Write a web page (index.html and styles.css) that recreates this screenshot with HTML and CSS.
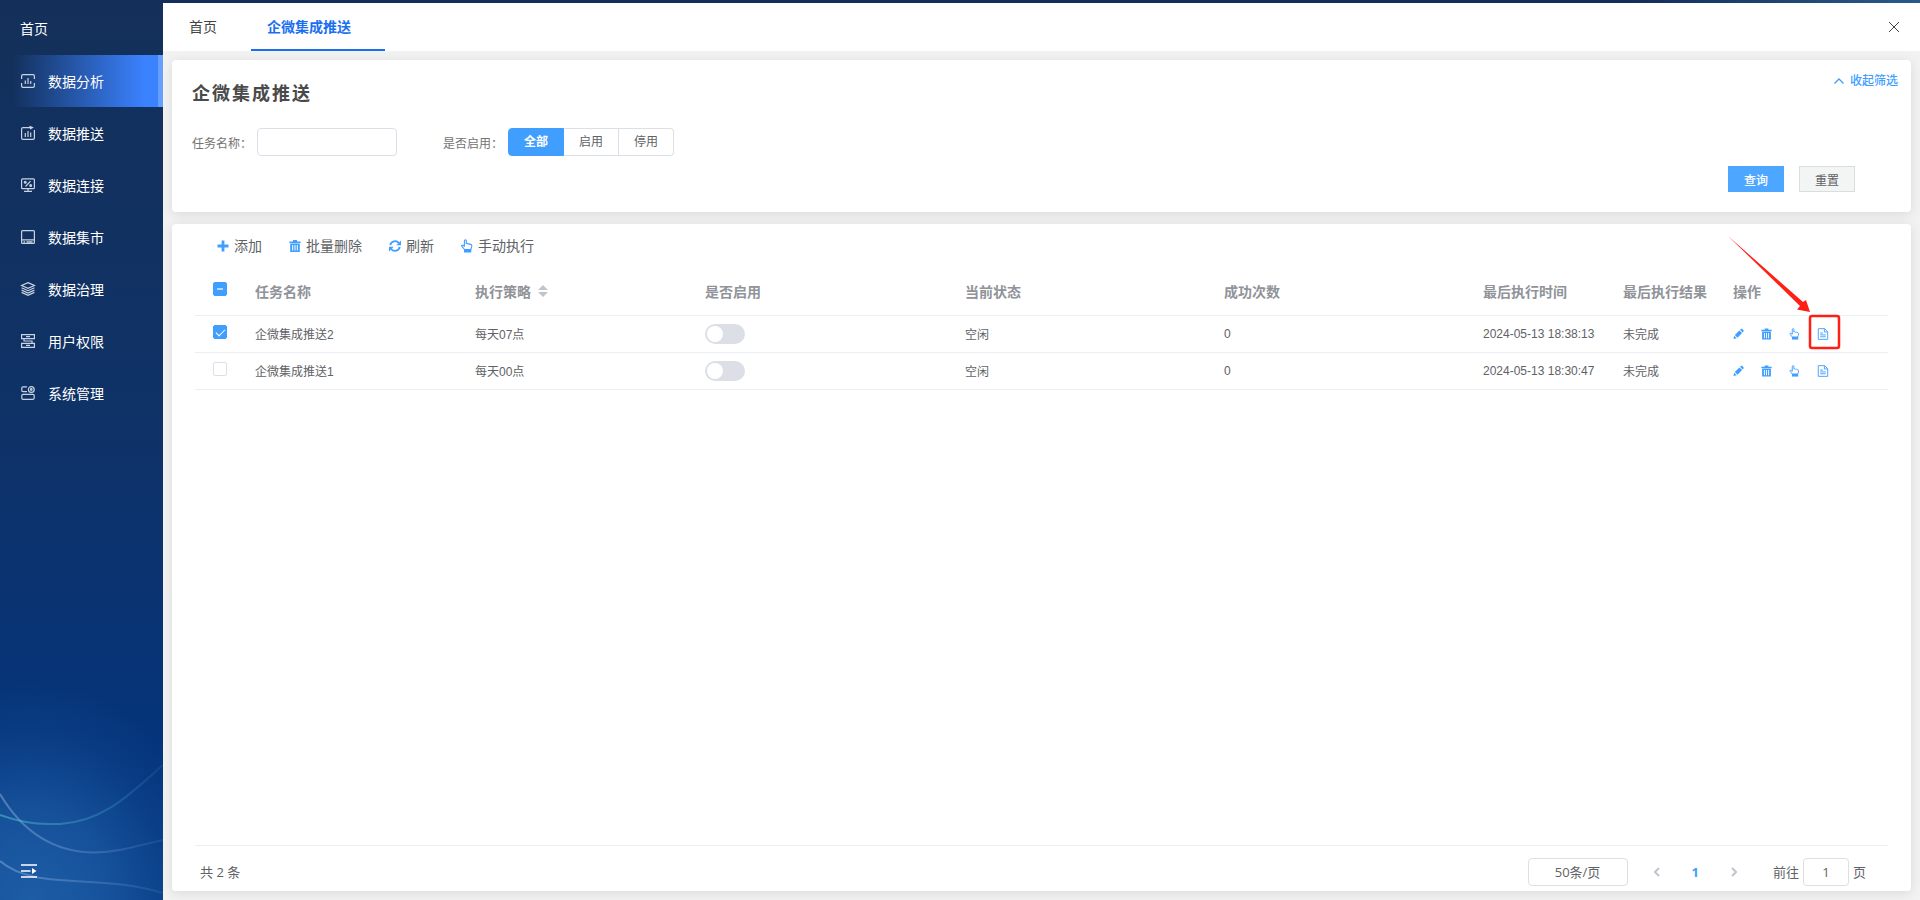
FILE: index.html
```html
<!DOCTYPE html>
<html lang="zh-CN">
<head>
  <meta charset="UTF-8">
  <meta name="viewport" content="width=device-width, initial-scale=1.0">
  <title>企微集成推送</title>
  <link rel="stylesheet" href="styles.css">
</head>
<body>
  <!-- shared icons -->
  <svg class="sprite" aria-hidden="true">
    <symbol id="i-trash" viewBox="0 0 12 12">
      <path fill="currentColor" fill-rule="evenodd" d="M4 0h4v1.4h3.6v1.5H.4V1.400H4zM1.200 3.500h9.600V12H1.200zM3.200 5v5.500h1V5zM5.500 5v5.500h1V5zM7.800 5v5.500h1V5z"/>
    </symbol>
    <symbol id="i-hand" viewBox="0 0 12 14">
      <path fill="none" stroke="currentColor" stroke-width="1.100" stroke-linejoin="round" d="M3.500 10.500L.8 7.200c-.4-.8.500-1.500 1.200-.9l1.400 1V1.700c0-1.300 1.900-1.300 1.900 0v3c.6-.5 1.500-.3 1.800.3.700-.4 1.500-.1 1.700.5.900-.3 2 .1 2 1.200 0 1.600-.6 2.500-1 3.800z"/>
      <path fill="currentColor" d="M3 10.500h7.300v3H3z"/>
    </symbol>
    <symbol id="i-edit" viewBox="0 0 12 12">
      <path fill="currentColor" d="M.5 11.500l.8-3.600 2.800 2.800zM2 7.100l5-5L9.900 5l-5 5zM7.700 1.400L8.600.6c.5-.4 1-.4 1.500 0l1.300 1.300c.4.5.4 1 0 1.500l-.8.900z"/>
    </symbol>
    <symbol id="i-doc" viewBox="0 0 12 13">
      <path fill="none" stroke="currentColor" d="M.9.700h6.800l3.400 3.400v8.200H.9zM7.500.7v3.600h3.600M3 5.500h3M3 7.500h6M3 9.500h6"/>
    </symbol>
  </svg>

  <div class="layout">
    <aside class="sidebar">
      <svg class="waves" viewBox="0 0 163 220" preserveAspectRatio="none" aria-hidden="true">
        <defs>
          <linearGradient id="teal"><stop offset="0" stop-color="#3f9fc0" stop-opacity=".8"/><stop offset="1" stop-color="#3f8fc0" stop-opacity=".15"/></linearGradient>
          <linearGradient id="pale"><stop offset="0" stop-color="#8fb0e0" stop-opacity=".5"/><stop offset="1" stop-color="#7fa8e0" stop-opacity=".12"/></linearGradient>
        </defs>
        <path stroke="url(#teal)" d="M0 135C28 145 46 144 60 144C104 142 132 112 163 85"/>
        <path stroke="url(#pale)" d="M0 114C22 151 52 172 94 172.500C120 172 140 165 163 160"/>
        <path stroke="url(#pale)" d="M0 181C34 211 98 193 163 213"/>
      </svg>
      <a class="home" href="#">首页</a>
      <nav class="menu">
        <a class="menu-item active" href="#">
          <svg viewBox="0 0 14 14"><path d="M.6 5V2Q.6.600 2 .6h10q1.400 0 1.400 1.400v3M.6 9v3q0 1.400 1.400 1.400h10q1.400 0 1.400-1.400V9M4.300 10V6.500M7 10V4M9.700 10V7"/></svg>数据分析</a>
        <a class="menu-item" href="#">
          <svg viewBox="0 0 14 14"><path d="M10 1.600H2Q.6 1.600.6 3v9q0 1.400 1.400 1.400h10q1.400 0 1.400-1.400V4M8.500.2L11.500 1.600 9 3M4.300 11V7M7 11V5M9.700 11V6.500"/></svg>数据推送</a>
        <a class="menu-item" href="#">
          <svg viewBox="0 0 14 14"><path d="M1.500.8h11q.9 0 .9.900v8q0 .9-.9.900h-11q-.9 0-.9-.9v-8q0-.9.9-.9zM7 11v2M3 13.300h8M4.500 8.500l5-5.300M3.200 4.200h2M8.700 7.500h2"/><circle cx="4.200" cy="4.200" r=".9"/><circle cx="9.700" cy="7.500" r=".9"/></svg>数据连接</a>
        <a class="menu-item" href="#">
          <svg viewBox="0 0 14 14"><path d="M1.500.6h11q.9 0 .9.900v11q0 .9-.9.900h-11q-.9 0-.9-.9v-11q0-.9.900-.9zM.6 9.800h12.800M2.500 11.800h1.500M5.500 11.800h6"/></svg>数据集市</a>
        <a class="menu-item" href="#">
          <svg viewBox="0 0 14 14"><path d="M7 .6l6.400 2.900L7 6.400.6 3.500zM.6 5.800L7 8.700l6.400-2.900M.6 8.100L7 11l6.400-2.900M.6 10.400L7 13.300l6.400-2.900"/></svg>数据治理</a>
        <a class="menu-item" href="#">
          <svg viewBox="0 0 14 14"><path d="M.6.600h12.800v4H.6zM.6 9.400h12.800v4H.6zM5 2.600h4M5 11.400h4M3 4.600V7h8v2.400"/></svg>用户权限</a>
        <a class="menu-item" href="#">
          <svg viewBox="0 0 14 14"><path d="M6 .8H2Q.8.800.8 2v2.500q0 1.200 1.200 1.200h4M2 8.400h10q1.200 0 1.200 1.200v2.500q0 1.200-1.200 1.200H2Q.8 13.300.8 12.100V9.600Q.8 8.400 2 8.400z"/><circle cx="10.300" cy="3.500" r="2.900"/><circle cx="10.300" cy="3.500" r=".8"/></svg>系统管理</a>
      </nav>
      <button class="collapse" type="button" aria-label="收起菜单">
        <svg viewBox="0 0 16 14"><path fill="none" stroke="#fff" stroke-width="1.500" d="M0 1h16M0 7h9.500M0 13h16"/><path fill="#fff" d="M11 4l4.500 3L11 10z"/></svg>
      </button>
    </aside>

    <main class="main">
      <header class="tabs">
        <a class="tab" href="#">首页</a>
        <a class="tab current" href="#">企微集成推送</a>
        <button class="close" type="button" aria-label="关闭">
          <svg viewBox="0 0 12 12"><path fill="none" stroke="#444" d="M1 1l10 10M11 1L1 11"/></svg>
        </button>
      </header>

      <div class="content">
        <section class="card filter">
          <div class="filter-head">
            <h1>企微集成推送</h1>
            <button class="fold" type="button">
              <svg viewBox="0 0 10 6"><path fill="none" stroke="currentColor" stroke-width="1.300" d="M.5 5.500L5 1l4.500 4.500"/></svg>收起筛选</button>
          </div>
          <form class="filter-form">
            <div class="field">
              <label for="task-name">任务名称：</label>
              <input class="text-input" type="text" id="task-name">
            </div>
            <div class="field">
              <span id="enabled-label">是否启用：</span>
              <div class="radio-group" role="radiogroup" aria-labelledby="enabled-label">
                <label><input type="radio" name="enabled" checked><span>全部</span></label>
                <label><input type="radio" name="enabled"><span>启用</span></label>
                <label><input type="radio" name="enabled"><span>停用</span></label>
              </div>
            </div>
          </form>
          <div class="filter-actions">
            <button class="btn primary" type="button">查询</button>
            <button class="btn" type="button">重置</button>
          </div>
        </section>

        <section class="card list">
          <div class="toolbar">
            <button type="button"><svg viewBox="0 0 12 12"><path fill="none" stroke="currentColor" stroke-width="2.800" d="M6 .5v11M.5 6h11"/></svg>添加</button>
            <button type="button"><svg><use href="#i-trash"/></svg>批量删除</button>
            <button type="button"><svg viewBox="0 0 12 12"><path fill="none" stroke="currentColor" stroke-width="1.800" d="M1.300 5.200A4.800 4.800 0 0 1 9.800 3M10.700 6.800A4.800 4.800 0 0 1 2.200 9"/><path fill="currentColor" d="M12 .5v4.700H7.300zM0 11.500V6.800h4.700z"/></svg>刷新</button>
            <button type="button"><svg class="hand"><use href="#i-hand"/></svg>手动执行</button>
          </div>

          <table class="table">
            <colgroup>
              <col class="c-check"><col class="c-name"><col class="c-plan"><col class="c-enabled"><col><col><col class="c-time"><col class="c-result"><col class="c-ops">
            </colgroup>
            <thead>
              <tr>
                <th class="check"><input class="box partial" type="checkbox" aria-label="全选"></th>
                <th>任务名称</th>
                <th><span class="sortable">执行策略<svg viewBox="0 0 10 12"><path fill="#c0c4cc" d="M5 0l5 5H0zM5 12L0 7h10z"/></svg></span></th>
                <th>是否启用</th>
                <th>当前状态</th>
                <th>成功次数</th>
                <th>最后执行时间</th>
                <th>最后执行结果</th>
                <th>操作</th>
              </tr>
            </thead>
            <tbody>
              <tr>
                <td class="check"><input class="box" type="checkbox" checked aria-label="选择 企微集成推送2"></td>
                <td>企微集成推送2</td>
                <td>每天07点</td>
                <td><input class="switch" type="checkbox" role="switch" aria-label="启用 企微集成推送2"></td>
                <td>空闲</td>
                <td>0</td>
                <td>2024-05-13 18:38:13</td>
                <td>未完成</td>
                <td>
                  <div class="ops">
                    <button type="button" aria-label="编辑"><svg><use href="#i-edit"/></svg></button>
                    <button type="button" aria-label="删除"><svg><use href="#i-trash"/></svg></button>
                    <button type="button" aria-label="手动执行"><svg><use href="#i-hand"/></svg></button>
                    <button class="marked" type="button" aria-label="日志"><svg class="doc"><use href="#i-doc"/></svg>
                      <svg class="marker" viewBox="0 0 114 116" aria-hidden="true">
                        <path fill="#ff2015" d="M0 0L75 66 78 64 82 76 69 73.500 72 70z"/>
                        <rect x="82" y="80" width="29" height="32" rx="2" fill="none" stroke="#ff2015" stroke-width="2.500"/>
                      </svg>
                    </button>
                  </div>
                </td>
              </tr>
              <tr>
                <td class="check"><input class="box" type="checkbox" aria-label="选择 企微集成推送1"></td>
                <td>企微集成推送1</td>
                <td>每天00点</td>
                <td><input class="switch" type="checkbox" role="switch" aria-label="启用 企微集成推送1"></td>
                <td>空闲</td>
                <td>0</td>
                <td>2024-05-13 18:30:47</td>
                <td>未完成</td>
                <td>
                  <div class="ops">
                    <button type="button" aria-label="编辑"><svg><use href="#i-edit"/></svg></button>
                    <button type="button" aria-label="删除"><svg><use href="#i-trash"/></svg></button>
                    <button type="button" aria-label="手动执行"><svg><use href="#i-hand"/></svg></button>
                    <button type="button" aria-label="日志"><svg class="doc"><use href="#i-doc"/></svg></button>
                  </div>
                </td>
              </tr>
            </tbody>
          </table>

          <footer class="pagination">
            <span class="total">共 2 条</span>
            <select class="page-size" aria-label="每页条数">
              <option>50条/页</option>
            </select>
            <div class="pager">
              <button type="button" aria-label="上一页"><svg viewBox="0 0 6 10"><path d="M5 1L1 5l4 4"/></svg></button>
              <button class="page" type="button">1</button>
              <button type="button" aria-label="下一页"><svg viewBox="0 0 6 10"><path d="M1 1l4 4-4 4"/></svg></button>
            </div>
            <div class="jump">
              <label for="page-no">前往</label>
              <input type="text" id="page-no" value="1">
              <span>页</span>
            </div>
          </footer>
        </section>
      </div>
    </main>
  </div>
</body>
</html>
```

FILE: styles.css
```css
* {
  box-sizing: border-box;
}
body {
  margin: 0;
  font-family: "Liberation Sans", "Noto Sans CJK SC", sans-serif;
  font-size: 12px;
  color: #606266;
  background: #f2f2f2;
}
a {
  color: inherit;
  text-decoration: none;
}
button, input, select {
  margin: 0;
  font: inherit;
  color: inherit;
}
button {
  padding: 0;
  border: none;
  background: none;
  cursor: pointer;
}
svg {
  display: block;
  flex-shrink: 0;
}
.sprite {
  position: absolute;
  width: 0;
  height: 0;
}
.layout {
  display: flex;
  min-height: 100vh;
  padding-top: 3px;
  background: linear-gradient(90deg, #132e59 85%, #2a5a8a) top / 100% 3px no-repeat;
}

/* sidebar */
.sidebar {
  position: relative;
  display: flex;
  flex-direction: column;
  flex-shrink: 0;
  width: 163px;
  margin-top: -3px;
  padding: 3px 0 22px;
  color: #fff;
  font-size: 14px;
  background:
    radial-gradient(ellipse 190px 220px at 30px 100%, #1d5da6 0%, rgba(29, 93, 166, 0.7) 40%, rgba(29, 93, 166, 0.2) 75%, rgba(29, 93, 166, 0) 100%),
    linear-gradient(180deg, #14305a 0%, #0e3268 50%, #04347c 85%, #063a82 100%);
}
.waves {
  position: absolute;
  left: 0;
  bottom: 0;
  width: 100%;
  height: 220px;
}
.waves path {
  fill: none;
  stroke-width: 2;
}
.home {
  padding: 0 20px;
  line-height: 52px;
}
.menu {
  flex: 1;
}
.menu-item {
  display: flex;
  align-items: center;
  gap: 13px;
  height: 52px;
  padding-left: 21px;
}
.menu-item svg {
  width: 14px;
  height: 14px;
  overflow: visible;
  fill: none;
  stroke: #c9d3e2;
  stroke-width: 1.2;
}
.menu-item.active {
  background: linear-gradient(90deg, rgba(60, 130, 255, 0) 8%, #3b82ff 92%);
  border-right: 5px solid #65a0ff;
}
.collapse {
  position: relative;
  width: 16px;
  margin-left: 21px;
}

/* tabs */
.main {
  display: flex;
  flex: 1;
  flex-direction: column;
  min-width: 0;
}
.tabs {
  display: flex;
  align-items: stretch;
  height: 48px;
  padding: 0 20px 0 10px;
  font-size: 14px;
  line-height: 48px;
  color: #444;
  background: #fff;
}
.tab {
  padding: 0 34px 0 16px;
}
.tab.current {
  color: #1a6ff0;
  font-weight: bold;
  box-shadow: inset 0 -2px #1a6ff0;
}
.close {
  width: 12px;
  margin-left: auto;
}

/* cards */
.content {
  display: flex;
  flex: 1;
  flex-direction: column;
  gap: 12px;
  padding: 9px;
}
.card {
  background: #fff;
  border-radius: 4px;
  box-shadow: 0 2px 12px rgba(0, 0, 0, 0.1);
}
.filter {
  padding: 0 13px 20px 20px;
}
.filter-head {
  display: flex;
  justify-content: space-between;
  align-items: flex-start;
  height: 68px;
}
h1 {
  margin: 0;
  font-size: 18px;
  line-height: 68px;
  letter-spacing: 2px;
  color: #4a4a4a;
}
.fold {
  display: flex;
  align-items: center;
  gap: 6px;
  line-height: 42px;
  font-weight: 500;
  color: #409eff;
}
.fold svg {
  width: 10px;
  height: 6px;
}
.filter-form {
  display: flex;
  gap: 46px;
}
.field {
  display: flex;
  align-items: center;
  gap: 5px;
  color: #737373;
}
.text-input {
  width: 140px;
  height: 28px;
  padding: 0 8px;
  border: 1px solid #dcdfe6;
  border-radius: 4px;
}
.radio-group {
  display: flex;
}
.radio-group label {
  position: relative;
}
.radio-group input {
  position: absolute;
  inset: 0;
  opacity: 0;
}
.radio-group span {
  display: block;
  padding: 0 15px;
  line-height: 26px;
  color: #606266;
  border: 1px solid #dcdfe6;
  border-left: none;
}
.radio-group label:first-child span {
  border-left: 1px solid #dcdfe6;
  border-radius: 4px 0 0 4px;
}
.radio-group label:last-child span {
  border-radius: 0 4px 4px 0;
}
.radio-group input:checked + span {
  color: #fff;
  font-weight: bold;
  background: #409eff;
  border-color: #409eff !important;
}
.filter-actions {
  display: flex;
  justify-content: flex-end;
  gap: 15px;
  padding: 10px 43px 0 0;
}
.btn {
  width: 56px;
  height: 26px;
  border: 1px solid #d9dddd;
  background: #f3f5f5;
}
.btn.primary {
  color: #fff;
  font-weight: 500;
  background: #4da6ff;
  border-color: #4da6ff;
}

/* list */
.list {
  display: flex;
  flex: 1;
  flex-direction: column;
  padding: 0 23px;
}
.toolbar {
  display: flex;
  gap: 27px;
  padding-left: 22px;
  font-size: 14px;
}
.toolbar button {
  display: flex;
  align-items: center;
  gap: 5px;
  line-height: 44px;
}
.toolbar svg {
  width: 12px;
  height: 12px;
  color: #409eff;
}
.toolbar svg.hand {
  height: 14px;
}
.table {
  width: 100%;
  table-layout: fixed;
  border-collapse: collapse;
}
.c-check { width: 50px; }
.c-name { width: 220px; }
.c-plan { width: 230px; }
.c-enabled { width: 260px; }
.c-time { width: 140px; }
.c-result { width: 110px; }
.c-ops { width: 165px; }
.table th, .table td {
  padding: 0 10px;
  text-align: left;
  white-space: nowrap;
  border-bottom: 1px solid #ebeef5;
}
.table th {
  height: 47px;
  font-size: 14px;
  color: #909399;
}
.table td {
  height: 37px;
}
.table .check {
  padding: 0 0 4px 18px;
}
.sortable {
  display: flex;
  align-items: center;
  gap: 7px;
}
.sortable svg {
  width: 10px;
  height: 12px;
}
.box {
  display: block;
  width: 14px;
  height: 14px;
  appearance: none;
  border: 1px solid #dcdfe6;
  border-radius: 2px;
  background: #fff;
}
.box:checked, .box.partial {
  border-color: #409eff;
  background: #409eff;
}
.box:checked::after {
  content: "";
  display: block;
  width: 4px;
  height: 8px;
  margin: 1px 0 0 4px;
  border: solid #fff;
  border-width: 0 1px 1px 0;
  transform: rotate(45deg);
}
.box.partial::after {
  content: "";
  display: block;
  width: 6px;
  height: 2px;
  margin: 5px 0 0 3px;
  background: #b3d8ff;
}
.switch {
  display: block;
  width: 40px;
  height: 20px;
  padding: 2px;
  appearance: none;
  border-radius: 10px;
  background: #dcdfe6;
}
.switch::after {
  content: "";
  display: block;
  width: 16px;
  height: 16px;
  border-radius: 8px;
  background: #fff;
}
.ops {
  display: flex;
  gap: 17px;
  color: #409eff;
}
.ops svg {
  width: 11px;
  height: 12px;
}
.ops .doc {
  width: 12px;
}
.marked {
  position: relative;
}
/* arrow and frame pointing at the log button */
.ops .marker {
  position: absolute;
  top: -92px;
  right: -13px;
  width: 114px;
  height: 116px;
  pointer-events: none;
}

/* pagination */
.pagination {
  display: flex;
  align-items: center;
  margin-top: auto;
  padding: 12px 22px 5px 5px;
  font-family: "Open Sans", "Noto Sans CJK SC", sans-serif;
  font-size: 13px;
  line-height: 18px;
  border-top: 1px solid #ebeef5;
}
.total {
  margin-right: auto;
}
.page-size, .jump input {
  height: 28px;
  padding: 0;
  text-align: center;
  text-align-last: center;
  border: 1px solid #dcdfe6;
  border-radius: 4px;
  background: #fff;
}
.page-size {
  width: 100px;
  appearance: none;
}
.pager {
  display: flex;
  align-items: center;
  gap: 32px;
  margin: 0 36px 0 26px;
  color: #409eff;
  font-weight: bold;
}
.pager svg {
  width: 6px;
  height: 10px;
  fill: none;
  stroke: #c0c4cc;
  stroke-width: 2;
}
.jump {
  display: flex;
  align-items: center;
  gap: 4px;
}
.jump input {
  width: 46px;
}
```
